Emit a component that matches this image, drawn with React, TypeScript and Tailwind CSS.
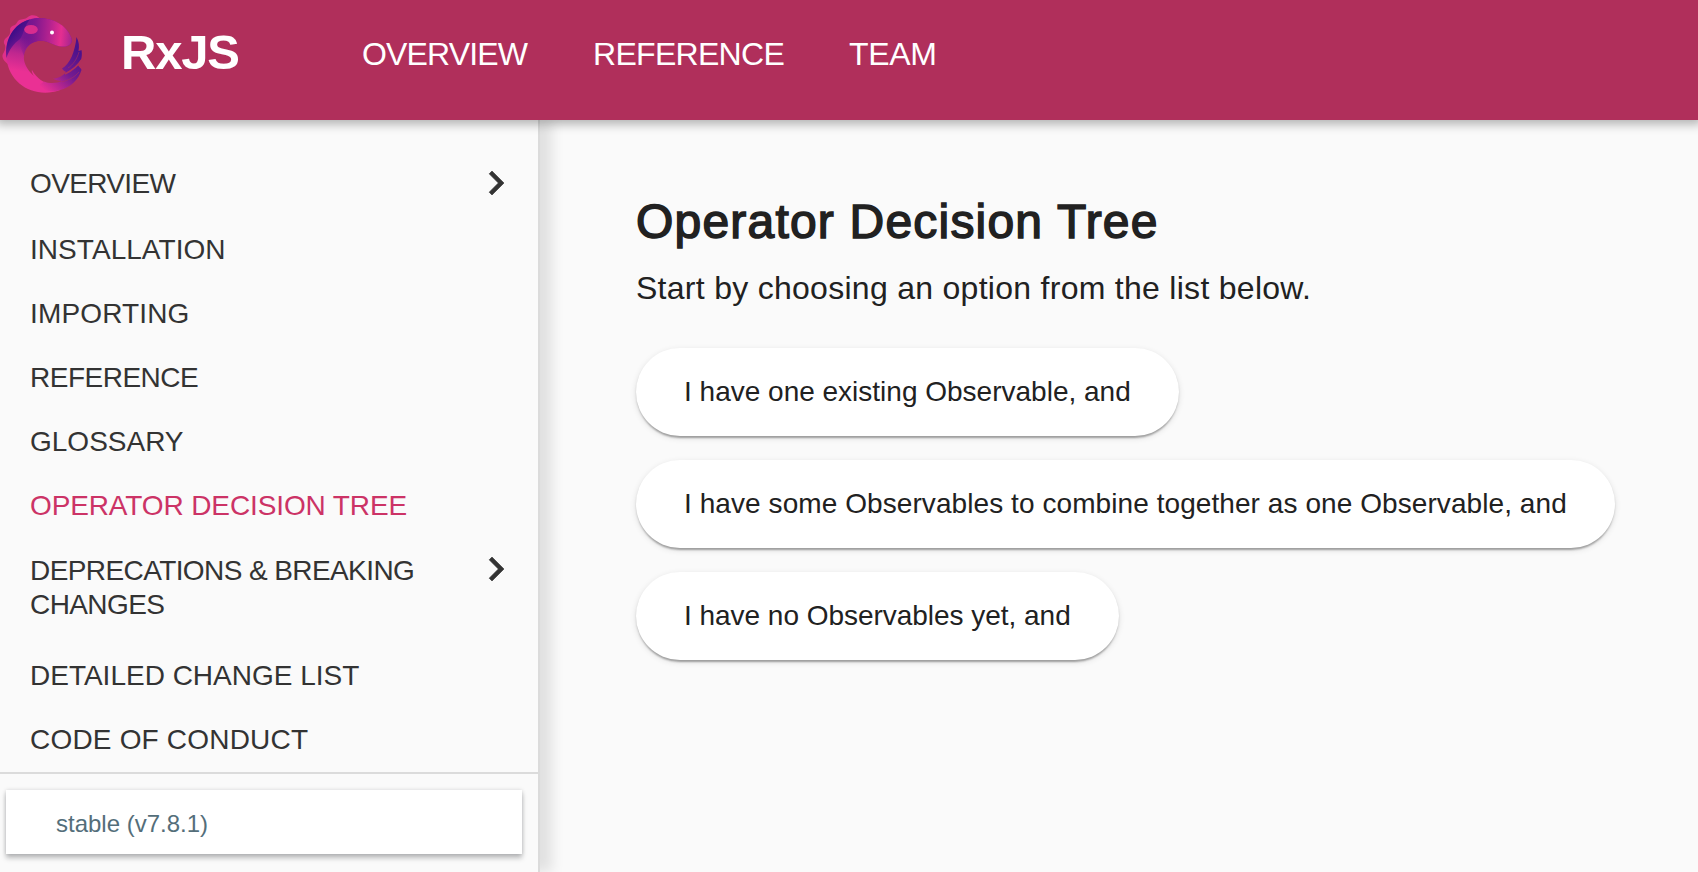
import React from 'react';

const nav = [
  { label: 'OVERVIEW', cls: 'w-[231px] tracking-[-0.85px]' },
  { label: 'REFERENCE', cls: 'w-[256px] tracking-[-0.7px]' },
  { label: 'TEAM', cls: 'tracking-[-0.3px]' },
];

type Item = { label: string; cls: string; more?: boolean; active?: boolean };

const items: Item[] = [
  { label: 'OVERVIEW', cls: 'h-[66px] tracking-[-0.65px]', more: true },
  { label: 'INSTALLATION', cls: 'h-16 tracking-[0.05px]' },
  { label: 'IMPORTING', cls: 'h-16 tracking-[0.15px]' },
  { label: 'REFERENCE', cls: 'h-16 tracking-[-0.5px]' },
  { label: 'GLOSSARY', cls: 'h-16' },
  { label: 'OPERATOR DECISION TREE', cls: 'h-[65px] tracking-[-0.12px]', active: true },
  { label: 'DEPRECATIONS & BREAKING CHANGES', cls: 'h-[105px] tracking-[-0.59px]', more: true },
  { label: 'DETAILED CHANGE LIST', cls: 'h-16' },
  { label: 'CODE OF CONDUCT', cls: 'h-16 tracking-[0.19px]' },
];

const options = [
  { label: 'I have one existing Observable, and', cls: '' },
  { label: 'I have some Observables to combine together as one Observable, and', cls: 'tracking-[0.075px]' },
  { label: 'I have no Observables yet, and', cls: 'tracking-[-0.03px]' },
];

function Logo() {
  return (
    <svg className="h-[80px] w-[84px] shrink-0" viewBox="0 0 84 80" aria-hidden="true">
      <defs>
        <linearGradient id="body" gradientUnits="userSpaceOnUse" x1="42" y1="10" x2="30" y2="76">
          <stop offset="0" stopColor="#7a1791" />
          <stop offset="0.25" stopColor="#7a1791" />
          <stop offset="0.5" stopColor="#c0278f" />
          <stop offset="0.75" stopColor="#ea3094" />
          <stop offset="1" stopColor="#ea3094" />
        </linearGradient>
        <linearGradient id="head" gradientUnits="userSpaceOnUse" x1="20" y1="22" x2="72" y2="26">
          <stop offset="0" stopColor="#5a1290" stopOpacity="0" />
          <stop offset="0.3" stopColor="#85188f" />
          <stop offset="0.55" stopColor="#b3228f" />
          <stop offset="0.78" stopColor="#e52e90" />
          <stop offset="1" stopColor="#a3258f" />
        </linearGradient>
        <linearGradient id="tail" gradientUnits="userSpaceOnUse" x1="80" y1="38" x2="44" y2="76">
          <stop offset="0" stopColor="#4b118b" />
          <stop offset="0.45" stopColor="#741b90" />
          <stop offset="0.75" stopColor="#b8268f" />
          <stop offset="1" stopColor="#ea3094" />
        </linearGradient>
        <linearGradient id="mane" gradientUnits="userSpaceOnUse" x1="12" y1="20" x2="24" y2="30">
          <stop offset="0" stopColor="#3f0e88" />
          <stop offset="1" stopColor="#5a1290" stopOpacity="0.5" />
        </linearGradient>
      </defs>
      <path
        d="M40 4.500C37 1 31 0 28 3C25 5.500 22 5 19 6C17 8 17 9 15 11C12 12 10 13 10 16C11 19 9 22 6 24C4 26 3 28 5 31C6 35 4 38 2.500 41C2 45 5 48 8 50L18 24Z"
        fill="#e0308a"
      />
      <path
        d="M6.500 44C4 24 17 5 38 4C53 4 66 11 71 23C74 30 68 33 62 32.500C53 32 47 25 38 27C28 29 23 37 24 46C25 51 28 57 34 62C32 59 31.500 57 32 56C37 65 44 69 51 70L60 76C36 85 9 71 6.500 44Z"
        fill="url(#body)"
      />
      <path
        d="M16 22C22 9 32 4 40 4C54 4.500 66 11 71 23C74 30 68 33 62 32.500C53 32 47 25 38 27C30 28 25 34 24 42Z"
        fill="url(#head)"
      />
      <path d="M6.500 44C4 26 14 9 30 5.500C24 12 24 20 20 25C14 29 9 36 6.500 44Z" fill="url(#mane)" />
      <ellipse cx="31" cy="15.500" rx="6.800" ry="4.600" fill="#d82c8f" />
      <circle cx="52" cy="18.500" r="2" fill="#fff" />
      <path
        d="M76.500 23C79 28 79.500 32 78.500 37C80 37 81 36 81.500 36C82.500 42 81.500 47 78 51C79.500 54 81 54 81.500 56C79 65 70 74 60 76C52 79 44 77 38 72L44 67.500C50 70 58 69 62 67C58 67 55 66 53 64.500C58 64.500 63 62 66 58C64 57 63 56 62 54.500C70 50 75 38 76.500 23Z"
        fill="url(#tail)"
      />
      <path d="M81.500 46C77 53 71 57 65 60" stroke="#b02f5b" strokeWidth="1.6" fill="none" />
      <path d="M79 38C77 45 73 51 68 54M79 58C74 64 68 66 62 68" stroke="#b02f5b" strokeOpacity="0.6" strokeWidth="0.9" fill="none" />
    </svg>
  );
}

function Chevron({ cls }: { cls: string }) {
  return (
    <svg
      className={`h-12 w-12 shrink-0 ${cls}`}
      viewBox="0 0 24 24"
      fill="#333"
      stroke="#333"
      strokeWidth="0.3"
      aria-hidden="true"
    >
      <path d="M10 6L8.590 7.410 13.170 12l-4.580 4.590L10 18l6-6z" />
    </svg>
  );
}

export default function App() {
  return (
    <div className="flex h-[872px] w-[1698px] flex-col overflow-hidden bg-[#fafafa] font-['Liberation_Sans',Arial,sans-serif]">
      <header className="relative z-10 flex h-[120px] shrink-0 bg-[#b02f5b] pt-[14px] text-white shadow-[0_0_10px_4px_rgba(0,0,0,0.3)]">
        <Logo />
        <div className="ml-[37px] mt-[13px] w-[241px] text-[49px] font-bold leading-[50px] tracking-[-1.2px]">RxJS</div>
        <nav className="mt-[20px] flex text-[32px] leading-[40px]">
          {nav.map((n) => (
            <a key={n.label} className={n.cls}>{n.label}</a>
          ))}
        </nav>
      </header>
      <div className="flex min-h-0 flex-1">
        <aside className="flex w-[540px] shrink-0 flex-col border-r-2 border-[#dbdbdb] shadow-[12px_0_12px_rgba(0,0,0,0.1)]">
          <div className="flex h-[654px] flex-col overflow-hidden border-b-2 border-[#dbdbdb] pt-[31px]">
            {items.map((it) => (
              <a
                key={it.label}
                className={`flex shrink-0 justify-between pl-[30px] pr-[18px] pt-2 text-[28px] leading-[34px] ${it.active ? 'text-[#cc3366]' : 'text-[#333]'} ${it.cls}`}
              >
                <span className="w-[400px] pt-[8px]">{it.label}</span>
                {it.more && <Chevron cls={it.label === 'OVERVIEW' ? '' : '-mt-px'} />}
              </a>
            ))}
          </div>
          <div className="ml-[6px] mt-[16px] flex h-16 w-[516px] items-center bg-white pl-[50px] pt-[3px] text-[24px] text-[#546e7a] shadow-[0_4px_5px_rgba(10,16,20,0.26),0_0_4px_rgba(10,16,20,0.14)]">
            stable (v7.8.1)
          </div>
        </aside>
        <main className="flex flex-col items-start pl-[96px] pt-[72px] text-[#212121]">
          <h1 className="text-[48px] leading-[60px] tracking-[1.2px] [-webkit-text-stroke:1.5px_#212121]">
            Operator Decision Tree
          </h1>
          <p className="mt-[16px] text-[32px] leading-[40px] tracking-[0.28px]">
            Start by choosing an option from the list below.
          </p>
          <div className="mt-[40px] flex flex-col items-start gap-6">
            {options.map((o) => (
              <button
                key={o.label}
                className={`h-[88px] whitespace-nowrap rounded-[44px] bg-white px-12 text-[28px] shadow-[0_4px_2px_-2px_rgba(0,0,0,0.2),0_2px_2px_0_rgba(0,0,0,0.14),0_2px_6px_0_rgba(0,0,0,0.12)] ${o.cls}`}
              >
                {o.label}
              </button>
            ))}
          </div>
        </main>
      </div>
    </div>
  );
}
